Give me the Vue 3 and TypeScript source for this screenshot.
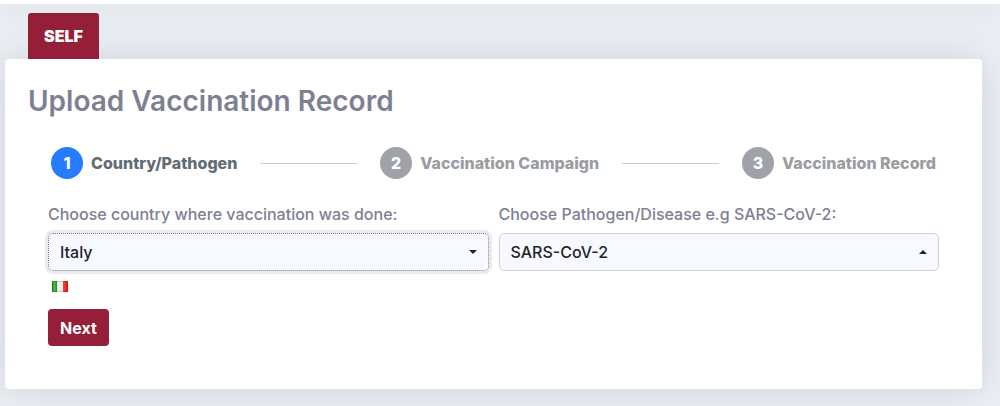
<script setup lang="ts">
import { ref } from 'vue'

interface Step {
  id: number
  label: string
}

const steps: Step[] = [
  { id: 1, label: 'Country/Pathogen' },
  { id: 2, label: 'Vaccination Campaign' },
  { id: 3, label: 'Vaccination Record' },
]

const activeStep = ref(1)
const country = ref('Italy')
const pathogen = ref('SARS-CoV-2')

function next(): void {
  activeStep.value = Math.min(activeStep.value + 1, steps.length)
}
</script>

<template>
  <div class="page">
    <div class="topbar"></div>
    <main class="content">
      <nav class="tabs">
        <button type="button" class="tab">SELF</button>
      </nav>
      <section class="card">
        <h1 class="title">Upload Vaccination Record</h1>
        <ol class="stepper">
          <template v-for="(step, index) in steps" :key="step.id">
            <li v-if="index > 0" class="line" aria-hidden="true"></li>
            <li class="step" :class="{ active: step.id === activeStep }">
              <span class="circle">{{ step.id }}</span>
              <span class="step-label">{{ step.label }}</span>
            </li>
          </template>
        </ol>
        <form class="form" @submit.prevent="next">
          <div class="fields">
            <div class="field">
              <label for="country">Choose country where vaccination was done:</label>
              <div class="picker focused">
                <select id="country" v-model="country">
                  <option>Italy</option>
                </select>
                <svg class="caret" viewBox="0 0 8 4" aria-hidden="true"><path d="M0 0h8L4 4z" /></svg>
              </div>
            </div>
            <div class="field">
              <label for="pathogen">Choose Pathogen/Disease e.g SARS-CoV-2:</label>
              <div class="picker">
                <select id="pathogen" v-model="pathogen">
                  <option>SARS-CoV-2</option>
                </select>
                <svg class="caret" viewBox="0 0 8 4" aria-hidden="true"><path d="M0 4h8L4 0z" /></svg>
              </div>
            </div>
          </div>
          <svg class="flag" viewBox="0 0 16 11" role="img" aria-label="Italy">
            <defs>
              <linearGradient id="flag-green"><stop offset="0" stop-color="#16871b" /><stop offset="0.5" stop-color="#52bd55" /><stop offset="1" stop-color="#138a1c" /></linearGradient>
              <linearGradient id="flag-red"><stop offset="0" stop-color="#f5483c" /><stop offset="1" stop-color="#ee0d0d" /></linearGradient>
            </defs>
            <path fill="#eeeeee" d="M0 0h16v11H0z" />
            <path fill="url(#flag-green)" d="M0 0h5v11H0z" />
            <path fill="url(#flag-red)" d="M11 0h5v11h-5z" />
            <path fill="none" stroke="#000000" stroke-opacity="0.15" d="M.5.5h15v10H.5z" />
          </svg>
          <button type="submit" class="next">Next</button>
        </form>
      </section>
    </main>
  </div>
</template>

<style>
body {
  background: #ecf0f5;
}
</style>

<style scoped>
.page {
  box-sizing: border-box;
  min-height: 100vh;
  overflow: hidden;
  background: #ecf0f5;
  color: #7e8092;
  font-family: Inter, "Open Sans", "Liberation Sans", sans-serif;
  font-size: 16px;
  font-weight: 500;
}

.topbar {
  height: 4px;
  background: #ffffff;
  box-shadow: 0 0 36px 4px rgba(75, 85, 100, 0.16);
}

.content {
  padding: 9px 18px 17px 5px;
}

.tabs {
  display: flex;
  padding-left: 23px;
}

.tab {
  height: 46px;
  padding: 0 16px;
  border: 0;
  border-radius: 3px 3px 0 0;
  background: #951f38;
  color: #ffffff;
  font: inherit;
  font-weight: 900;
}

.card {
  box-sizing: border-box;
  min-height: 330px;
  padding: 25px 23px 43px;
  border-radius: 4px;
  background: #ffffff;
  box-shadow: 0 0 36px rgba(75, 85, 100, 0.2);
}

.title {
  margin: 0;
  font-size: 28px;
  font-weight: 600;
  line-height: 34px;
}

.stepper {
  display: flex;
  align-items: center;
  margin: 0;
  padding: 29px 0 23px;
  list-style: none;
}

.step {
  display: flex;
  align-items: center;
  gap: 8px;
  padding: 0 23px;
  color: #999da2;
  font-weight: 800;
  line-height: 32px;
  white-space: nowrap;
}

.step.active {
  color: #636b73;
}

.circle {
  width: 32px;
  height: 32px;
  border-radius: 50%;
  background: #9fa3a9;
  color: #ffffff;
  text-align: center;
}

.step.active .circle {
  background: #257cff;
}

.line {
  flex: 1;
  height: 1px;
  background: #cccfd2;
}

.form {
  padding: 0 20px;
}

.fields {
  display: grid;
  grid-template-columns: 1fr 1fr;
  gap: 10px;
}

.field label {
  display: block;
  margin-bottom: 7px;
  line-height: 24px;
  white-space: nowrap;
}

.picker {
  display: flex;
  align-items: center;
  position: relative;
  height: 38px;
  border-radius: 5px;
}

.picker select {
  width: 100%;
  height: 38px;
  padding: 0 30px 0 11px;
  border: 1px solid #cfd0df;
  border-radius: 5px;
  outline: 0;
  appearance: none;
  background: #f8f9fe;
  color: #20232b;
  font: inherit;
}

.focused {
  box-shadow: 0 0 0 3px #eaebef;
}

.focused select {
  border: 1px dotted #777a8c;
}

.caret {
  position: absolute;
  right: 12px;
  width: 8px;
  height: 4px;
  fill: #20232b;
  pointer-events: none;
}

.flag {
  display: block;
  width: 16px;
  height: 11px;
  margin: 10px 4px 17px;
}

.next {
  display: block;
  height: 37px;
  padding: 0 12px;
  border: 0;
  border-radius: 4px;
  background: #951f38;
  color: #ffffff;
  font: inherit;
  font-weight: 700;
}
</style>
